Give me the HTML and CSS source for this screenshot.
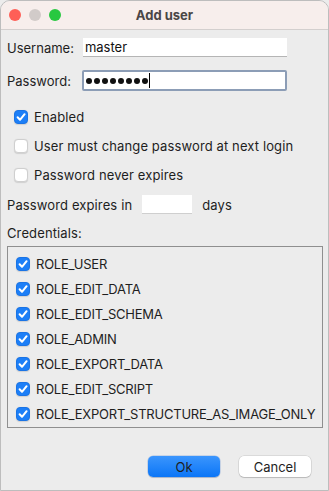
FILE: index.html
```html
<!DOCTYPE html>
<html lang="en">
<head>
    <meta charset="UTF-8">
    <meta name="viewport" content="width=device-width, initial-scale=1.0">
    <title>Add user</title>
    <link rel="stylesheet" href="styles.css">
</head>
<body>
    <div class="window">
        <div class="titlebar">
            <div class="lights">
                <span class="light red"></span>
                <span class="light gray"></span>
                <span class="light green"></span>
            </div>
            <div class="title">Add user</div>
        </div>

        <div class="content">
            <div class="row row-username">
                <label class="label">Username:</label>
                <div class="field username">master</div>
            </div>
            <div class="row row-password">
                <label class="label">Password:</label>
                <div class="field password focused" aria-label="password">
                    <span class="dot"></span><span class="dot"></span><span class="dot"></span><span class="dot"></span><span class="dot"></span><span class="dot"></span><span class="dot"></span><span class="dot"></span><span class="caret"></span>
                </div>
            </div>

            <div class="check-row first">
                <span class="box checked"><svg viewBox="0 0 14 14"><path d="M3.6 7.3 L6 9.8 L10.6 4.2"/></svg></span>
                <span class="text">Enabled</span>
            </div>
            <div class="check-row">
                <span class="box"></span>
                <span class="text">User must change password at next login</span>
            </div>
            <div class="check-row">
                <span class="box"></span>
                <span class="text">Password never expires</span>
            </div>

            <div class="row row-expires">
                <span class="label text">Password expires in</span>
                <div class="field days"></div>
                <span class="label text">days</span>
            </div>

            <div class="row row-credentials">
                <span class="label text">Credentials:</span>
            </div>

            <div class="roles">
                <div class="role"><span class="box checked"><svg viewBox="0 0 14 14"><path d="M3.6 7.3 L6 9.8 L10.6 4.2"/></svg></span><span>ROLE_USER</span></div>
                <div class="role"><span class="box checked"><svg viewBox="0 0 14 14"><path d="M3.6 7.3 L6 9.8 L10.6 4.2"/></svg></span><span>ROLE_EDIT_DATA</span></div>
                <div class="role"><span class="box checked"><svg viewBox="0 0 14 14"><path d="M3.6 7.3 L6 9.8 L10.6 4.2"/></svg></span><span>ROLE_EDIT_SCHEMA</span></div>
                <div class="role"><span class="box checked"><svg viewBox="0 0 14 14"><path d="M3.6 7.3 L6 9.8 L10.6 4.2"/></svg></span><span>ROLE_ADMIN</span></div>
                <div class="role"><span class="box checked"><svg viewBox="0 0 14 14"><path d="M3.6 7.3 L6 9.8 L10.6 4.2"/></svg></span><span>ROLE_EXPORT_DATA</span></div>
                <div class="role"><span class="box checked"><svg viewBox="0 0 14 14"><path d="M3.6 7.3 L6 9.8 L10.6 4.2"/></svg></span><span>ROLE_EDIT_SCRIPT</span></div>
                <div class="role"><span class="box checked"><svg viewBox="0 0 14 14"><path d="M3.6 7.3 L6 9.8 L10.6 4.2"/></svg></span><span>ROLE_EXPORT_STRUCTURE_AS_IMAGE_ONLY</span></div>
            </div>

            <div class="buttons">
                <button class="btn primary">Ok</button>
                <button class="btn">Cancel</button>
            </div>
        </div>
    </div>
</body>
</html>
```

FILE: styles.css
```css
html, body {
    margin: 0;
    padding: 0;
    background: #ececec;
}

body {
    font-family: Inter, "Noto Sans", "Liberation Sans", sans-serif;
    font-size: 13px;
    color: #1e1e1e;
}

.window {
    width: 329px;
    height: 491px;
    box-sizing: border-box;
    border: 1px solid #bdbdbd;
    border-radius: 10px 10px 0 0;
    background: #ececec;
    overflow: hidden;
}

.titlebar {
    height: 28px;
    background: #f7eeec;
    border-bottom: 1px solid #d3cfce;
    display: flex;
    align-items: center;
    position: relative;
}

.lights {
    display: flex;
    gap: 8px;
    padding-left: 8px;
}

.light {
    width: 12px;
    height: 12px;
    border-radius: 50%;
}

.light.red { background: #fe5f57; }
.light.gray { background: #d1cbc9; }
.light.green { background: #28c840; }

.title {
    position: absolute;
    left: 0;
    right: 0;
    text-align: center;
    font-weight: 700;
    font-size: 13px;
    color: #4a4646;
    pointer-events: none;
}

.content {
    padding: 0 6px 0 6px;
}

.text {
    letter-spacing: 0.12px;
}

.row {
    display: flex;
    align-items: center;
}

.row-username {
    margin-top: 8px;
    height: 19px;
}

.row-password {
    margin-top: 13px;
    height: 21px;
}

.field {
    box-sizing: border-box;
    background: #fff;
    display: flex;
    align-items: center;
    padding-left: 2px;
    font-size: 13px;
    color: #111;
}

.username {
    margin-left: 9px;
    width: 204px;
    height: 19px;
    border-bottom: 1px solid #b5b5b5;
}

.password {
    margin-left: 11px;
    width: 205px;
    height: 21px;
    border: 2px solid #8c9db6;
    border-radius: 2px;
    padding-left: 2px;
    gap: 2px;
}

.dot {
    width: 6px;
    height: 6px;
    border-radius: 50%;
    background: #111;
}

.caret {
    width: 1px;
    height: 15px;
    background: #000;
    margin-left: -1px;
}

.check-row {
    display: flex;
    align-items: center;
    height: 20px;
    margin-top: 9px;
    padding-left: 7px;
    gap: 6px;
}

.check-row.first {
    margin-top: 16px;
}

.box {
    width: 14px;
    height: 14px;
    box-sizing: border-box;
    border-radius: 4px;
    background: #fff;
    border: 1px solid #cfcfcf;
    box-shadow: 0 0.5px 1px rgba(0, 0, 0, 0.12);
    flex: none;
    display: flex;
}

.box.checked {
    background: #1d7ff7;
    border-color: #1a74e6;
}

.box svg {
    width: 14px;
    height: 14px;
    margin: -1px;
}

.box path {
    fill: none;
    stroke: #fff;
    stroke-width: 2;
    stroke-linecap: round;
    stroke-linejoin: round;
}

.row-expires {
    margin-top: 10px;
    height: 19px;
}

.days {
    width: 50px;
    height: 19px;
    margin: 0 10px 0 10px;
    border-bottom: 1px solid #cfcfcf;
}

.row-credentials {
    margin-top: 11px;
    height: 16px;
}

.roles {
    margin-top: 5px;
    width: 316px;
    height: 182px;
    box-sizing: border-box;
    border: 1px solid #8f8f8f;
    padding: 4px 0 0 8px;
}

.role {
    display: flex;
    align-items: center;
    height: 25px;
    gap: 6px;
    letter-spacing: -0.22px;
}

.buttons {
    display: flex;
    justify-content: flex-end;
    gap: 19px;
    margin-top: 28px;
    padding-right: 11px;
}

.btn {
    width: 72px;
    height: 21px;
    border: none;
    border-radius: 5px;
    background: #fff;
    box-shadow: 0 0 0 0.5px rgba(0, 0, 0, 0.15), 0 1px 1px rgba(0, 0, 0, 0.15);
    font-family: inherit;
    font-size: 13px;
    color: #1e1e1e;
    padding: 0;
}

.btn.primary {
    background: linear-gradient(#3b95fd, #0b76f7);
    box-shadow: 0 0 0 0.5px rgba(0, 80, 200, 0.3), 0 1px 1px rgba(0, 0, 0, 0.15);
}
```
